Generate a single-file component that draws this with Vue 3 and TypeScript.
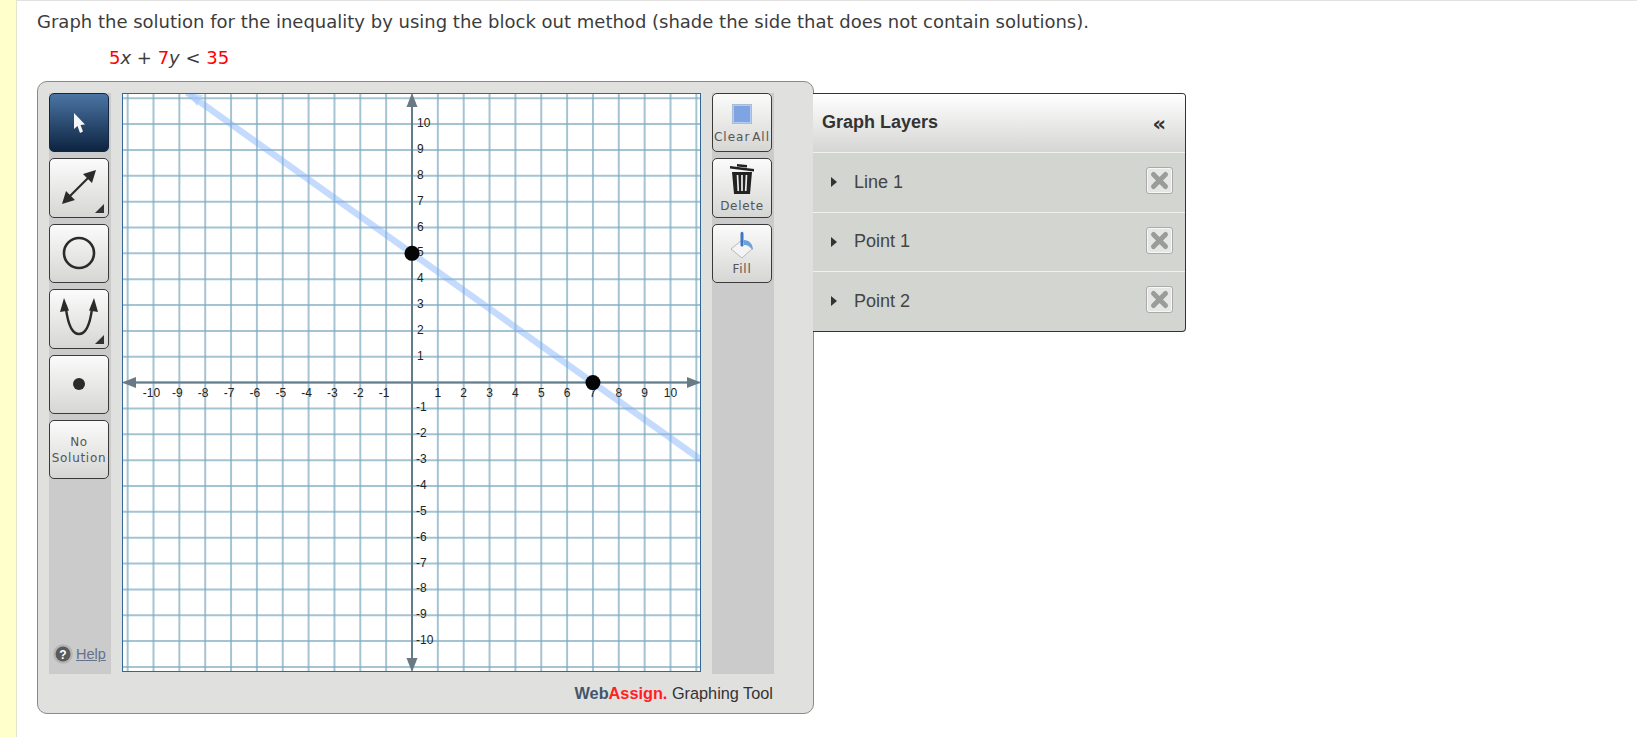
<script setup lang="ts">
type Tick = { n: number; pos: number };

const originX = 412;
const originY = 382.6;
const unit = 25.85;

const range: number[] = [];
for (let i = -11; i <= 11; i++) range.push(i);

const xLines: Tick[] = range.map((n) => ({ n, pos: originX + n * unit }));
const yLines: Tick[] = range.map((n) => ({ n, pos: originY - n * unit }));
const xLabels = xLines.filter((t) => t.n !== 0 && Math.abs(t.n) <= 10);
const yLabels = yLines.filter((t) => t.n !== 0 && Math.abs(t.n) <= 10);

// canvas offset inside the svg
const left = 122;
const top = 93;

const layers = ["Line 1", "Point 1", "Point 2"];

const lineY = (x: number) => originY - ((35 - 5 * ((x - originX) / unit)) / 7) * unit;
</script>

<template>
  <div class="page">
    <div class="strip"></div>
    <div class="content">
      <p class="question">
        Graph the solution for the inequality by using the block out method (shade the side that does not contain solutions).
      </p>
      <p class="equation">
        <span class="red">5</span><i>x</i> + <span class="red">7</span><i>y</i> &lt; <span class="red">35</span>
      </p>

      <div class="tool-row">
        <div class="widget">
          <div class="widget-body">
            <div class="column">
              <button class="tool active">
                <svg width="26" height="26" viewBox="0 0 26 26">
                  <path d="M8 3 L8 19 L11.500 16 L14 23 L17 21.500 L14.500 15 L19 14.500 Z" fill="#f4f6f8" />
                </svg>
              </button>
              <button class="tool">
                <svg class="lifted" width="44" height="44" viewBox="0 0 44 44">
                  <path d="M10 34 L34 10" stroke="#2b2b2b" stroke-width="2.200" />
                  <path d="M5 39 L9 26 L18 35 Z M39 5 L35 18 L26 9 Z" fill="#2b2b2b" />
                </svg>
                <span class="corner"></span>
              </button>
              <button class="tool">
                <svg width="44" height="44" viewBox="0 0 44 44">
                  <circle cx="22" cy="22" r="15" fill="none" stroke="#2b2b2b" stroke-width="2.600" />
                </svg>
              </button>
              <button class="tool">
                <svg width="44" height="44" viewBox="0 0 44 44">
                  <path d="M9 12 C11 27 15 37 22 37 C29 37 33 27 35 12" fill="none" stroke="#2b2b2b" stroke-width="2.400" />
                  <path d="M7 1 L3 15 L12 13.500 Z M37 1 L32 13.500 L41 15 Z" fill="#2b2b2b" />
                </svg>
                <span class="corner"></span>
              </button>
              <button class="tool">
                <svg width="14" height="14" viewBox="0 0 14 14">
                  <circle cx="7" cy="7" r="6" fill="#2b2b2b" />
                </svg>
              </button>
              <button class="tool text-tool">
                <span class="tool-label">No</span>
                <span class="tool-label">Solution</span>
              </button>
              <div class="help">
                <svg width="20" height="20" viewBox="0 0 20 20">
                  <circle cx="10" cy="10" r="9.800" fill="#b4b4b4" />
                  <circle cx="10" cy="10" r="7.500" fill="#5a5a5a" />
                  <text x="10" y="14.500" text-anchor="middle" class="help-mark">?</text>
                </svg>
                <a class="help-link">Help</a>
              </div>
            </div>

            <svg class="canvas" width="579" height="579" :viewBox="`${left} ${top} 579 579`">
              <rect :x="left" :y="top" width="579" height="579" fill="#fff" />
              <line
                v-for="t in xLines"
                :key="`x${t.n}`"
                :x1="t.pos"
                :x2="t.pos"
                :y1="top"
                :y2="top + 579"
                class="grid"
              />
              <line
                v-for="t in yLines"
                :key="`y${t.n}`"
                :y1="t.pos"
                :y2="t.pos"
                :x1="left"
                :x2="left + 579"
                class="grid"
              />
              <line :x1="originX" :x2="originX" :y1="top + 8" :y2="top + 571" class="axis" />
              <line :y1="originY" :y2="originY" :x1="left + 8" :x2="left + 571" class="axis" />
              <path :d="`M${originX} ${top} l-5.500 14 h11 Z`" fill="#6a7a85" />
              <path :d="`M${originX} ${top + 579} l-5.500 -14 h11 Z`" fill="#6a7a85" />
              <path :d="`M${left} ${originY} l14 -5.500 v11 Z`" fill="#6a7a85" />
              <path :d="`M${left + 579} ${originY} l-14 -5.500 v11 Z`" fill="#6a7a85" />

              <text v-for="t in xLabels" :key="`xl${t.n}`" :x="t.pos - (t.n < 0 ? 2 : 0)" :y="originY + 14" class="num" text-anchor="middle">{{ t.n }}</text>
              <text v-for="t in yLabels" :key="`yl${t.n}`" :x="originX + (t.n < 0 ? 4 : 5)" :y="t.pos + 3" class="num">{{ t.n }}</text>

              <line :x1="187" :y1="lineY(187)" :x2="left + 579" :y2="lineY(left + 579)" class="solution" />
              <path d="M187 93 L203 95 L197 106 Z" fill="#a9cbfb" opacity="0.6" />
              <circle :cx="originX" :cy="originY - 5 * unit" r="7.500" fill="#050505" />
              <circle :cx="originX + 7 * unit" :cy="originY" r="7.500" fill="#050505" />
            </svg>

            <div class="column">
              <button class="tool icon-tool">
                <span class="clear-box"></span>
                <span class="tool-label clear-label">Clear All</span>
              </button>
              <button class="tool icon-tool">
                <svg width="26" height="32" viewBox="0 0 26 32">
                  <path d="M1 3 L25 6 L25 8.500 L1 5.500 Z M8 1 L18 2 L18 4.500 L8 3.500 Z" fill="#222" />
                  <path d="M3 9 H23 L21 31 H5 Z" fill="#222" />
                  <path d="M8.500 12 L9.300 28 M13 12 V28 M17.500 12 L16.700 28" stroke="#eee" stroke-width="1.700" />
                </svg>
                <span class="tool-label delete-label">Delete</span>
              </button>
              <button class="tool icon-tool">
                <svg width="26" height="30" viewBox="0 0 26 30">
                  <path d="M2 19 L13 10 L23 19 L13 28 Z" fill="#f4f4f4" stroke="#b8b8b8" />
                  <path d="M11.500 4 C11.500 1 14.500 1 14.500 4 L14.500 15 C14.500 17 11.500 17 11.500 15 Z" fill="#3d77c4" />
                  <path d="M15 10 C20 10 24 14 24 20 C21 16 19 15 15 15 Z" fill="#6ba0dc" />
                </svg>
                <span class="tool-label fill-label">Fill</span>
              </button>
            </div>
          </div>
          <div class="brand">
            <b class="web">Web</b><b class="assign">Assign.</b> Graphing Tool
          </div>
        </div>

        <div class="layers">
          <div class="layers-head">
            <span class="layers-title">Graph Layers</span>
            <span class="collapse">«</span>
          </div>
          <div v-for="name in layers" :key="name" class="layer">
            <span class="caret"></span>
            <span class="layer-name">{{ name }}</span>
            <span class="remove">
              <svg width="21" height="21" viewBox="0 0 21 21">
                <path d="M4.500 4.500 L16.500 16.500 M16.500 4.500 L4.500 16.500" stroke="#9a9c9a" stroke-width="5" stroke-linecap="round" />
              </svg>
            </span>
          </div>
        </div>
      </div>
    </div>
  </div>
</template>

<style scoped>
.page {
  display: flex;
  height: 737px;
  overflow: hidden;
  background: #fff;
  font-family: "Liberation Sans", Arial, sans-serif;
}

.strip {
  width: 16px;
  flex: none;
  background: #ffffcc;
  border-right: 1px solid #e4e4d0;
}

.content {
  flex: 1;
  border-top: 1px solid #e2e2e2;
  padding: 11px 0 0 20px;
}

.question {
  margin: 0;
  font-family: "DejaVu Sans", Verdana, sans-serif;
  font-size: 18px;
  line-height: 20px;
  color: #3c3c3c;
}

.equation {
  margin: 16px 0 0 72px;
  font-family: "DejaVu Sans", Verdana, sans-serif;
  font-size: 18px;
  line-height: 20px;
  color: #3c3c3c;
}

.red {
  color: #ff0000;
}

.tool-row {
  display: flex;
  align-items: flex-start;
  margin-top: 13px;
}

.widget {
  width: 777px;
  height: 633px;
  box-sizing: border-box;
  background: #e0e0df;
  border: 1px solid #8a8a8a;
  border-radius: 10px;
  padding: 11px 0 0 11px;
  flex: none;
}

.widget-body {
  display: flex;
  align-items: flex-start;
  gap: 11px;
}

.column {
  width: 62px;
  height: 581px;
  flex: none;
  background: #cbcbcb;
  display: flex;
  flex-direction: column;
  gap: 6px;
  position: relative;
}

.tool {
  width: 60px;
  height: 59.400px;
  flex: none;
  padding: 0;
  box-sizing: border-box;
  border: 1px solid #3a3a3a;
  border-radius: 5px;
  background: linear-gradient(#fbfbfb, #d6d6d4);
  display: flex;
  flex-direction: column;
  align-items: center;
  justify-content: center;
  position: relative;
}

.active {
  border-color: #14263f;
  background: linear-gradient(#4b75a4, #0d2441);
}

.lifted {
  margin-bottom: 3px;
}

.corner {
  position: absolute;
  right: 4px;
  bottom: 4px;
  width: 0;
  height: 0;
  border-left: 9px solid transparent;
  border-bottom: 9px solid #333;
}

.tool-label {
  font-family: "DejaVu Sans", Verdana, sans-serif;
  font-size: 12px;
  line-height: 16px;
  letter-spacing: 0.7px;
  color: #555;
  white-space: nowrap;
}

.clear-label {
  word-spacing: -3px;
  letter-spacing: 1px;
}

.delete-label {
  margin-top: 1px;
}

.fill-label {
  margin-top: -1px;
}

.text-tool {
  gap: 0;
}

.icon-tool {
  gap: 2px;
}

.clear-box {
  width: 18px;
  height: 18px;
  background: #7ea4e4;
  border: 1px solid #aabbd4;
  box-shadow: inset 0 0 0 1px #b5cbef;
  margin-top: 4px;
  margin-bottom: 3px;
}

.help {
  position: absolute;
  left: 4px;
  bottom: 10px;
  display: flex;
  align-items: center;
  gap: 3px;
}

.help-mark {
  font-family: "Liberation Sans", Arial, sans-serif;
  font-size: 12px;
  font-weight: bold;
  fill: #fff;
}

.help-link {
  font-size: 14.500px;
  color: #66718a;
  text-decoration: underline;
}

.canvas {
  flex: none;
  outline: 1px solid #336699;
  outline-offset: -1px;
  display: block;
}

.grid {
  stroke: #7fabc1;
  stroke-opacity: 0.7;
  stroke-width: 2;
}

.axis {
  stroke: #607d8e;
  stroke-width: 2;
}

.num {
  font-family: "Liberation Sans", Arial, sans-serif;
  font-size: 12px;
  fill: #222;
}

.solution {
  stroke: #7fb0fb;
  stroke-opacity: 0.45;
  stroke-width: 6.500;
}

.brand {
  margin-top: 9px;
  padding-right: 40px;
  text-align: right;
  font-size: 16.300px;
  line-height: 20px;
  color: #333;
}

.web {
  color: #44556a;
}

.assign {
  color: #ff2020;
}

.layers {
  width: 373px;
  height: 239px;
  margin-left: -1px;
  margin-top: 12px;
  flex: none;
  box-sizing: border-box;
  border: 1px solid #333;
  border-left: none;
  border-radius: 0 4px 4px 0;
  overflow: hidden;
  background: #d3d5d1;
}

.layers-head {
  height: 58px;
  display: flex;
  align-items: center;
  justify-content: space-between;
  padding: 0 20px 0 9px;
  background: linear-gradient(#ffffff, #d5d6d3);
}

.layers-title {
  font-size: 18px;
  font-weight: bold;
  color: #333;
  margin-bottom: 1px;
}

.collapse {
  font-family: "DejaVu Sans", sans-serif;
  font-size: 21px;
  font-weight: bold;
  color: #333;
  letter-spacing: -1px;
  margin-top: 2px;
}

.layer {
  height: 59.500px;
  box-sizing: border-box;
  border-top: 1px solid #f0f0ee;
  display: flex;
  align-items: center;
  padding: 0 12px 0 18px;
}

.caret {
  width: 0;
  height: 0;
  border-left: 6px solid #333;
  border-top: 5px solid transparent;
  border-bottom: 5px solid transparent;
}

.layer-name {
  margin-left: 17px;
  flex: 1;
  font-size: 18px;
  color: #444;
}

.remove {
  width: 27px;
  height: 27px;
  margin-bottom: 3px;
  box-sizing: border-box;
  border: 1px solid #aaa;
  border-radius: 3px;
  background: #e6e6e4;
  box-shadow: inset 0 0 0 1px #f7f7f5;
  display: flex;
  align-items: center;
  justify-content: center;
}
</style>
